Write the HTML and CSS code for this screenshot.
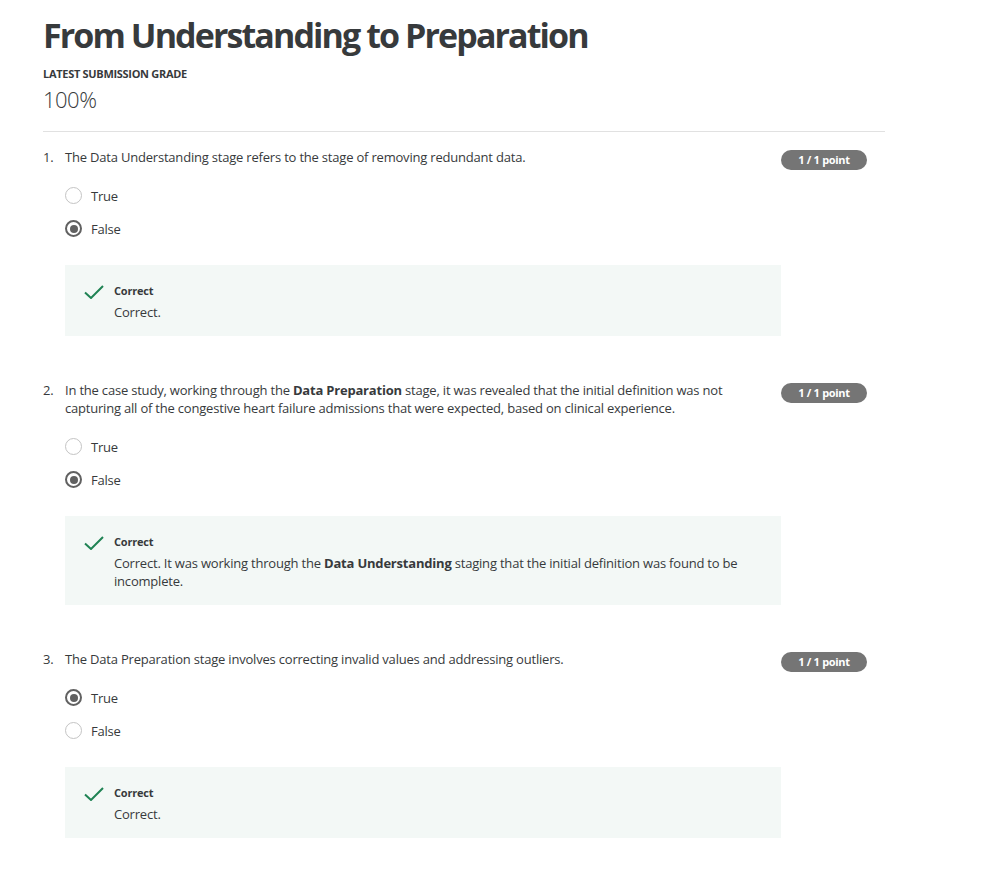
FILE: index.html
```html
<!DOCTYPE html>
<html>
<head>
<meta charset="utf-8">
<link rel="stylesheet" href="styles.css">
</head>
<body>
<main class="page">
  <header class="header">
    <h1 class="title">From Understanding to Preparation</h1>
    <div class="grade-label">LATEST SUBMISSION GRADE</div>
    <div class="grade">100%</div>
  </header>

  <section class="question">
    <div class="q-row">
      <div class="q-body">
        <div class="q-text"><span class="q-num">1.</span><span class="q-prompt">The Data Understanding stage refers to the stage of removing redundant data.</span></div>
        <div class="options">
          <div class="option"><span class="radio"></span><span class="opt-label">True</span></div>
          <div class="option"><span class="radio checked"></span><span class="opt-label">False</span></div>
        </div>
        <div class="feedback">
          <svg class="check" viewBox="0 0 20 14" width="20" height="14"><path d="M1 7.5 L7 13 L19 1" fill="none" stroke="#1f8354" stroke-width="2"/></svg>
          <div class="fb-content">
            <div class="fb-title">Correct</div>
            <div class="fb-text">Correct.</div>
          </div>
        </div>
      </div>
      <div class="badge">1 / 1 point</div>
    </div>
  </section>

  <section class="question">
    <div class="q-row">
      <div class="q-body">
        <div class="q-text"><span class="q-num">2.</span><span class="q-prompt">In the case study, working through the <b>Data Preparation</b> stage, it was revealed that the initial definition was not capturing all of the congestive heart failure admissions that were expected, based on clinical experience.</span></div>
        <div class="options">
          <div class="option"><span class="radio"></span><span class="opt-label">True</span></div>
          <div class="option"><span class="radio checked"></span><span class="opt-label">False</span></div>
        </div>
        <div class="feedback">
          <svg class="check" viewBox="0 0 20 14" width="20" height="14"><path d="M1 7.5 L7 13 L19 1" fill="none" stroke="#1f8354" stroke-width="2"/></svg>
          <div class="fb-content">
            <div class="fb-title">Correct</div>
            <div class="fb-text">Correct. It was working through the <b>Data Understanding</b> staging that the initial definition was found to be incomplete.</div>
          </div>
        </div>
      </div>
      <div class="badge">1 / 1 point</div>
    </div>
  </section>

  <section class="question">
    <div class="q-row">
      <div class="q-body">
        <div class="q-text"><span class="q-num">3.</span><span class="q-prompt">The Data Preparation stage involves correcting invalid values and addressing outliers.</span></div>
        <div class="options">
          <div class="option"><span class="radio checked"></span><span class="opt-label">True</span></div>
          <div class="option"><span class="radio"></span><span class="opt-label">False</span></div>
        </div>
        <div class="feedback">
          <svg class="check" viewBox="0 0 20 14" width="20" height="14"><path d="M1 7.5 L7 13 L19 1" fill="none" stroke="#1f8354" stroke-width="2"/></svg>
          <div class="fb-content">
            <div class="fb-title">Correct</div>
            <div class="fb-text">Correct.</div>
          </div>
        </div>
      </div>
      <div class="badge">1 / 1 point</div>
    </div>
  </section>
</main>
</body>
</html>
```

FILE: styles.css
```css
* { box-sizing: border-box; }
html, body { margin: 0; padding: 0; background: #fff; }
body {
  font-family: "Open Sans", "Liberation Sans", sans-serif;
  color: #373a3c;
  font-size: 13px;
  line-height: 18px;
  letter-spacing: -0.2px;
}
.page {
  width: 842px;
  margin-left: 43px;
  padding-top: 13px;
}
.header {
  border-bottom: 1px solid #e1e1e1;
  padding-bottom: 17px;
}
.title {
  margin: 0;
  font-size: 34px;
  line-height: 44px;
  font-weight: 700;
  color: #373a3c;
  letter-spacing: -1.9px;
}
.grade-label {
  margin-top: 9px;
  font-size: 11px;
  font-weight: 700;
  line-height: 16px;
  color: #373a3c;
  letter-spacing: -0.3px;
}
.grade {
  margin-top: 2px;
  font-size: 22px;
  font-weight: 300;
  line-height: 30px;
  color: #373a3c;
  letter-spacing: -0.5px;
}
.question { padding-top: 16px; }
.question + .question { padding-top: 45px; }
.q-row { display: flex; }
.q-body { width: 738px; }
.q-text { display: flex; }
.q-num { width: 22px; flex: none; }
.q-prompt { flex: 1; }
.q-prompt b, .fb-text b { font-weight: 700; }
.options {
  margin-left: 22px;
  margin-top: 13px;
}
.option {
  display: flex;
  align-items: center;
  height: 33px;
}
.radio {
  width: 17px;
  height: 17px;
  border-radius: 50%;
  border: 1.5px solid #c4c4c4;
  margin-right: 9px;
  position: relative;
  flex: none;
}
.radio.checked {
  border: 2px solid #616161;
}
.radio.checked::after {
  content: "";
  position: absolute;
  left: 2.5px; top: 2.5px;
  width: 8px; height: 8px;
  border-radius: 50%;
  background: #616161;
}
.feedback {
  margin-left: 22px;
  margin-top: 20px;
  width: 716px;
  background: #f3f8f6;
  display: flex;
  padding: 17px 30px 15px 19px;
}
.check { flex: none; margin-top: 3px; margin-right: 10px; }
.fb-title {
  font-size: 11px;
  font-weight: 700;
  line-height: 18px;
  color: #373a3c;
}
.fb-text { margin-top: 3px; }
.badge {
  margin-top: 2px;
  width: 86px;
  height: 20px;
  border-radius: 10px;
  background: #757575;
  color: #fff;
  font-size: 11px;
  font-weight: 700;
  line-height: 20px;
  text-align: center;
  flex: none;
  letter-spacing: -0.3px;
}
```
